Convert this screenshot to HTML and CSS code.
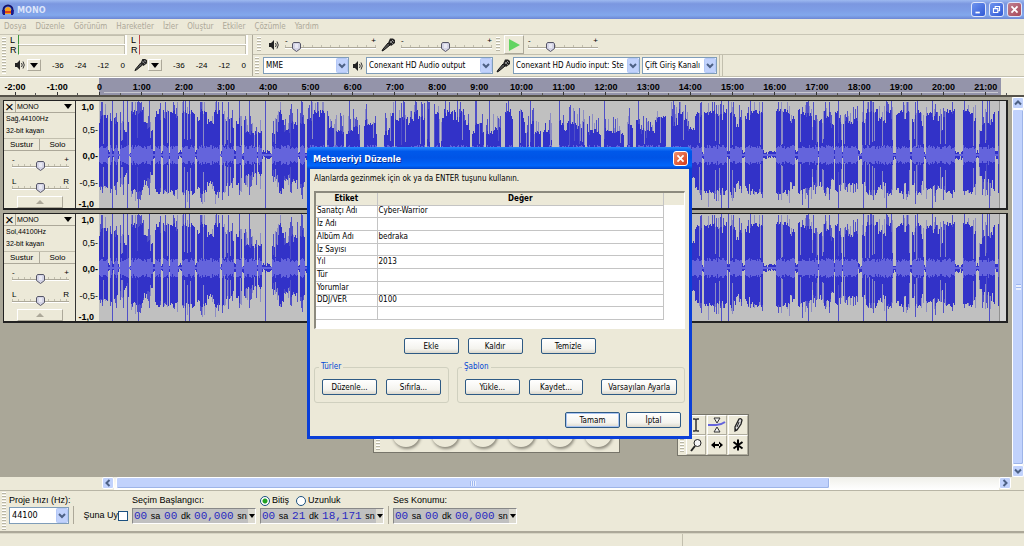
FILE: index.html
```html
<!DOCTYPE html>
<html lang="tr">
<head>
    <meta charset="UTF-8">
    <meta name="viewport" content="width=device-width, initial-scale=1.0">
    <title>MONO</title>
    <link rel="stylesheet" href="styles.css">
</head>
<body>

<svg class="symbols" aria-hidden="true">
    <symbol id="speaker" viewBox="0 0 12 12">
        <path d="M1 4h2l3-3v10L3 8H1z" fill="#222"/>
        <path d="M7.500 4q1.500 2 0 4M9 2.500q2.500 3.500 0 7" fill="none" stroke="#333"/>
    </symbol>
    <symbol id="mic" viewBox="0 0 15 14">
        <path d="M1 13l2-1 6-5-2-2-5 6z" fill="#555" stroke="#111"/>
        <path d="M7 5l3 3 4-3V2l-2-1.500H9z" fill="#222"/>
        <path d="M9 3l3 3M11 2l2 2M9 5l3-3" stroke="#aaa" stroke-width=".7"/>
    </symbol>
</svg>

<header class="titlebar">
    <svg class="app-icon" viewBox="0 0 12 12">
        <path d="M1.500 10V6a4.500 4.500 0 0 1 9 0v4" fill="none" stroke="#12126e" stroke-width="2"/>
        <path d="M3 5q3-4 6 0v5H3z" fill="#f5a21c"/>
        <path d="M3 7h6v2H3z" fill="#e0401a"/>
        <path d="M0 6h3v5H1zM9 6h3l-1 5H9z" fill="#1c1c8c"/>
    </svg>
    <h1>MONO</h1>
    <div class="window-buttons">
        <button type="button" aria-label="Simge durumuna küçült"><svg viewBox="0 0 15 15"><path d="M4 10h5v2H4z" fill="#fff"/></svg></button>
        <button type="button" aria-label="Önceki boyut"><svg viewBox="0 0 15 15"><path d="M6 6V4h5v5H9M4 6.500h5V11H4zM6 4h5" fill="none" stroke="#fff" stroke-width="1.300"/></svg></button>
        <button type="button" class="close dim" aria-label="Kapat"><svg viewBox="0 0 15 15"><path d="M4 4l7 7M11 4l-7 7" stroke="#fff" stroke-width="2"/></svg></button>
    </div>
</header>

<nav class="menu">
    <a href="#">Dosya</a>
    <a href="#">Düzenle</a>
    <a href="#">Görünüm</a>
    <a href="#">Hareketler</a>
    <a href="#">İzler</a>
    <a href="#">Oluştur</a>
    <a href="#">Etkiler</a>
    <a href="#">Çözümle</a>
    <a href="#">Yardım</a>
</nav>

<section class="toolbars">
    <div class="meter-bar">
        <div class="grip"></div>
        <div class="meter play">
            <div class="level"><span>L</span><i></i></div>
            <div class="level"><span>R</span><i></i></div>
            <div class="meter-scale">
                <svg class="icon"><use href="#speaker"/></svg>
                <button type="button" class="drop" aria-label="Çıkış ölçeri"></button>
                <span>-36</span><span>-24</span><span>-12</span><span>0</span>
            </div>
        </div>
        <div class="meter rec">
            <div class="level"><span>L</span><i></i></div>
            <div class="level"><span>R</span><i></i></div>
            <div class="meter-scale">
                <svg class="icon mic"><use href="#mic"/></svg>
                <button type="button" class="drop" aria-label="Giriş ölçeri"></button>
                <span>-36</span><span>-24</span><span>-12</span><span>0</span>
            </div>
        </div>
    </div>
    <div class="right-bars">
        <div class="bar">
            <div class="grip"></div>
            <svg class="icon"><use href="#speaker"/></svg>
            <div class="slider wide"><span>-</span><span>+</span><input type="range" aria-label="Çıkış düzeyi" value="8"></div>
            <svg class="icon mic"><use href="#mic"/></svg>
            <div class="slider wide"><span>-</span><span>+</span><input type="range" aria-label="Giriş düzeyi" value="49"></div>
            <div class="grip edge"></div>
            <button type="button" class="play-button" aria-label="Çal"><svg viewBox="0 0 12 12"><path d="M1 0l11 6-11 6z" fill="#62d462"/></svg></button>
            <div class="slider speed"><span>-</span><span>+</span><input type="range" aria-label="Çalma hızı" value="29"></div>
        </div>
        <div class="bar">
            <div class="grip"></div>
            <select class="host" aria-label="Ses sunucusu"><option>MME</option></select>
            <svg class="icon"><use href="#speaker"/></svg>
            <select class="device" aria-label="Çıkış aygıtı"><option>Conexant HD Audio output</option></select>
            <svg class="icon mic"><use href="#mic"/></svg>
            <select class="device" aria-label="Giriş aygıtı"><option>Conexant HD Audio input: Ste</option></select>
            <select class="channels" aria-label="Giriş kanalları"><option>Çift Giriş Kanalı</option></select>
            <div class="bar-end"></div>
        </div>
    </div>
</section>

<div class="ruler" id="ruler"></div>

<main class="workspace">
    <div class="tracks">
        <section class="track">
            <div class="track-panel">
                <div class="track-title"><button type="button" aria-label="İzi kapat">×</button><button type="button" class="name">MONO<i></i></button></div>
                <p>Sağ,44100Hz<br>32-bit kayan</p>
                <div class="mute-solo"><button type="button">Sustur</button><button type="button">Solo</button></div>
                <div class="slider small"><span>-</span><span>+</span><input type="range" aria-label="Kazanç" value="50"></div>
                <div class="slider small"><span>L</span><span>R</span><input type="range" aria-label="Denge" value="50"></div>
                <button type="button" class="collapse" aria-label="Daralt"></button>
            </div>
            <div class="amp"><b>1,0</b><span>0,5-</span><b>0,0-</b><span>-0,5-</span><b>-1,0</b></div>
            <svg class="wave" viewBox="0 0 907 107" preserveAspectRatio="none"></svg>
        </section>
        <section class="track">
            <div class="track-panel">
                <div class="track-title"><button type="button" aria-label="İzi kapat">×</button><button type="button" class="name">MONO<i></i></button></div>
                <p>Sol,44100Hz<br>32-bit kayan</p>
                <div class="mute-solo"><button type="button">Sustur</button><button type="button">Solo</button></div>
                <div class="slider small"><span>-</span><span>+</span><input type="range" aria-label="Kazanç" value="50"></div>
                <div class="slider small"><span>L</span><span>R</span><input type="range" aria-label="Denge" value="50"></div>
                <button type="button" class="collapse" aria-label="Daralt"></button>
            </div>
            <div class="amp"><b>1,0</b><span>0,5-</span><b>0,0-</b><span>-0,5-</span><b>-1,0</b></div>
            <svg class="wave" viewBox="0 0 907 107" preserveAspectRatio="none"></svg>
        </section>
    </div>
    <div class="vscroll">
        <button type="button" aria-label="Yukarı"><svg viewBox="0 0 10 10"><path d="M2 6.500l3-3 3 3"/></svg></button>
        <div class="thumb"></div>
        <button type="button" aria-label="Aşağı"><svg viewBox="0 0 10 10"><path d="M2 3.500l3 3 3-3"/></svg></button>
    </div>
</main>

<div class="hscroll">
    <button type="button" aria-label="Sola"><svg viewBox="0 0 10 10"><path d="M6.500 2l-3 3 3 3"/></svg></button>
    <div class="rail"><div class="thumb"></div></div>
    <button type="button" aria-label="Sağa"><svg viewBox="0 0 10 10"><path d="M3.500 2l3 3-3 3"/></svg></button>
</div>

<section class="selection-bar">
    <div class="grip"></div>
    <div class="field rate">
        <label for="rate">Proje Hızı (Hz):</label>
        <select id="rate"><option>44100</option></select>
    </div>
    <div class="divider"></div>
    <div class="snap"><label for="snap">Şuna Uy</label><input type="checkbox" id="snap"></div>
    <div class="field">
        <span>Seçim Başlangıcı:</span>
        <div class="time"><b>00</b> sa <b>00</b> dk <b>00,000</b> sn<button type="button" aria-label="Biçim"></button></div>
    </div>
    <div class="field end">
        <div class="radios">
            <input type="radio" name="range" id="end" checked><label for="end">Bitiş</label>
            <input type="radio" name="range" id="length"><label for="length">Uzunluk</label>
        </div>
        <div class="time"><b>00</b> sa <b>21</b> dk <b>18,171</b> sn<button type="button" aria-label="Biçim"></button></div>
    </div>
    <div class="divider"></div>
    <div class="field">
        <span>Ses Konumu:</span>
        <div class="time"><b>00</b> sa <b>00</b> dk <b>00,000</b> sn<button type="button" aria-label="Biçim"></button></div>
    </div>
</section>

<footer class="status"><span></span><span></span></footer>

<!-- floating toolbars -->
<div class="palette transport">
    <div class="grip"></div>
    <i></i><i></i><i></i><i></i><i></i><i></i>
</div>
<div class="palette tools">
    <div class="grip"></div>
    <div class="tool-grid">
        <button type="button" class="active" aria-label="Seçim"><svg viewBox="0 0 20 20"><path d="M7 4h2l1 1 1-1h2M7 16h2l1-1 1 1h2M10 5v10" fill="none" stroke="#333" stroke-width="1.500"/></svg></button>
        <button type="button" aria-label="Zarf"><svg viewBox="0 0 20 20"><path d="M1 10h8q5 0 9-3" fill="none" stroke="#6464dc" stroke-width="2"/><path d="M7 3h6l-3 5zM7 17h6l-3-5z" fill="#eee" stroke="#333"/></svg></button>
        <button type="button" aria-label="Çizim"><svg viewBox="0 0 20 20"><path d="M7 16V12l4-8q2-1 3 1l-1 4-4 6z" fill="#ddd" stroke="#222" stroke-width="1.300"/><path d="M7 16l2-1-2-2z" fill="#222"/><path d="M11 7l-2 5" stroke="#222"/></svg></button>
        <button type="button" aria-label="Yakınlaştır"><svg viewBox="0 0 20 20"><circle cx="11.500" cy="8" r="3.500" fill="#f6f6f6" stroke="#222"/><path d="M9 11l-4 5" stroke="#222" stroke-width="2"/></svg></button>
        <button type="button" aria-label="Zaman kaydırma"><svg viewBox="0 0 20 20"><path d="M4 10l4-3.500v7zM16 10l-4-3.500v7zM7 9h6v2H7z"/></svg></button>
        <button type="button" aria-label="Çoklu araç"><svg viewBox="0 0 20 20"><path d="M10 4.500v11M5.500 7l9 6.500M14.500 7l-9 6.500" stroke="#000" stroke-width="2"/></svg></button>
    </div>
</div>

<div class="dialog" role="dialog" aria-labelledby="dialogTitle">
    <div class="dialog-title">
        <h2 id="dialogTitle">Metaveriyi Düzenle</h2>
        <button type="button" class="close" aria-label="Kapat"><svg viewBox="0 0 15 15"><path d="M4 4l7 7M11 4l-7 7" stroke="#fff" stroke-width="2"/></svg></button>
    </div>
    <form class="dialog-body">
        <p>Alanlarda gezinmek için ok ya da ENTER tuşunu kullanın.</p>
        <div class="tag-grid">
            <table>
                <thead>
                    <tr><th>Etiket</th><th>Değer</th></tr>
                </thead>
                <tbody>
                    <tr><td>Sanatçı Adı</td><td>Cyber-Warrior</td></tr>
                    <tr><td>İz Adı</td><td></td></tr>
                    <tr><td>Albüm Adı</td><td>bedraka</td></tr>
                    <tr><td>İz Sayısı</td><td></td></tr>
                    <tr><td>Yıl</td><td>2013</td></tr>
                    <tr><td>Tür</td><td></td></tr>
                    <tr><td>Yorumlar</td><td></td></tr>
                    <tr><td>DDJ/VER</td><td>0100</td></tr>
                    <tr><td></td><td></td></tr>
                </tbody>
            </table>
        </div>
        <div class="row-buttons">
            <button type="button">Ekle</button>
            <button type="button">Kaldır</button>
            <button type="button" class="apart">Temizle</button>
        </div>
        <div class="groups">
            <fieldset>
                <legend>Türler</legend>
                <button type="button">Düzenle...</button>
                <button type="button">Sıfırla...</button>
            </fieldset>
            <fieldset class="template">
                <legend>Şablon</legend>
                <button type="button">Yükle...</button>
                <button type="button">Kaydet...</button>
                <button type="button" class="long apart">Varsayılan Ayarla</button>
            </fieldset>
        </div>
        <div class="dialog-actions">
            <button type="button" class="default">Tamam</button>
            <button type="button">İptal</button>
        </div>
    </form>
</div>

<script>
    const ruler = document.getElementById('ruler');
    for (let m = -2; m <= 21; m++) {
        const mark = document.createElement('span');
        mark.textContent = m === 0 ? '0' : m + ':00';
        ruler.appendChild(mark);
    }

    // pauses between phrases: [start, end] in wave columns
    const pauses = [[9, 10], [13, 14], [19, 20], [30, 31], [54, 55], [62, 63], [70, 70], [79, 82],
        [96, 97], [121, 122], [135, 136], [143, 144], [158, 158], [163, 172], [199, 200], [206, 207],
        [226, 227], [245, 246], [261, 264], [278, 284], [295, 295], [326, 327], [331, 334], [341, 341],
        [371, 372], [385, 386], [402, 405], [414, 419], [430, 430], [442, 443], [453, 459], [486, 487],
        [502, 504], [525, 527], [534, 536], [567, 571], [603, 604], [628, 630], [643, 645], [664, 676],
        [696, 698], [719, 719], [735, 735], [743, 743], [759, 762], [794, 796], [811, 812], [825, 826],
        [856, 863], [877, 879], [896, 898]];
    // columns where the signal reaches full scale
    const clips = [13, 24, 28, 39, 50, 84, 86, 90, 117, 140, 150, 166, 202, 212, 250, 296, 304, 316, 328,
        346, 358, 376, 377, 390, 409, 431, 460, 505, 539, 574, 622, 629, 651, 709, 739, 764, 771, 772,
        787, 792, 818, 833, 865, 883, 888, 890];

    let seed = 7;
    function rand() {
        seed = (seed * 16807) % 2147483647;
        return seed / 2147483647;
    }

    function column(x, up, down) {
        return `M${x + 0.5} ${Math.round(54 - up)}V${Math.round(54 + down)}`;
    }

    let haze = '', spikes = '', body = '', rms = '';
    let drift = 32;
    for (let x = 0; x < 900; x++) {
        const quiet = pauses.some(p => x >= p[0] && x <= p[1]);
        const up = quiet ? 1 + rand() * 4 : drift + rand() * 5;
        const down = quiet ? 1 + rand() * 4 : drift * 0.85 + rand() * 5;
        const soft = quiet ? 1 : 6 + rand() * 4;
        if (rand() > 0.6) {
            drift = Math.max(20, Math.min(41, drift + (rand() - 0.48) * 24));
        }

        if (clips.includes(x)) {
            spikes += column(x, 54, rand() > 0.5 ? 54 : 40);
        } else if (!quiet && rand() > 0.8) {
            spikes += column(x, Math.min(53, up + 5 + rand() * 14), down + rand() * 12);
        } else if (!quiet && rand() > 0.75) {
            haze += column(x, Math.min(53, up + 5 + rand() * 12), down + rand() * 14);
        }

        // some columns stay half covered above the loud part
        if (!quiet && rand() > 0.87) {
            haze += column(x, up, down);
            body += column(x, soft + rand() * 8, soft + rand() * 8);
        } else {
            body += column(x, up, down);
        }
        rms += column(x, soft, soft);
    }

    document.querySelectorAll('.wave').forEach(wave => {
        wave.innerHTML = `
            <path class="haze" d="${haze}"/>
            <path class="spikes" d="${spikes}"/>
            <path class="body" d="${body}"/>
            <path class="rms" d="${rms}"/>
            <path class="tail" d="M901 0h8v108h-8z"/>
            <path class="limit" d="M900.5 0v108"/>
        `;
    });
</script>

</body>
</html>
```

FILE: styles.css
```css
* {
    box-sizing: border-box;
}

body, h1, h2, p, button, input, select, fieldset {
    margin: 0;
    padding: 0;
    font-family: "DejaVu Sans Condensed", "DejaVu Sans", sans-serif;
    font-size: 8px;
}

body {
    position: relative;
    display: flex;
    flex-direction: column;
    min-height: 100vh;
    background-color: #ece9d8;
    color: #000;
    overflow: hidden;
}

button {
    display: flex;
    align-items: center;
    justify-content: center;
    border: none;
    background: none;
    color: #000;
}

svg {
    display: block;
    flex: none;
}

.symbols {
    position: absolute;
    width: 0;
    height: 0;
}

/* title bar */
.titlebar {
    display: flex;
    align-items: center;
    height: 19px;
    padding: 0 2px;
    gap: 3px;
    background: linear-gradient(#9db9f0, #7b97e0 20%, #7e9ee6 55%, #82a8ec 80%, #6d87d4);
}

.app-icon {
    width: 12px;
    height: 12px;
}

.titlebar h1 {
    flex: 1;
    color: #dbe4fa;
    font-size: 9px;
    font-weight: bold;
}

.window-buttons {
    display: flex;
    gap: 3px;
}

.window-buttons button, .close {
    width: 15px;
    height: 15px;
    border: 1px solid #dfe6fa;
    border-radius: 3px;
    background: linear-gradient(135deg, #6f94ee, #3059d6);
}

.window-buttons svg, .close svg {
    width: 13px;
    height: 13px;
}

button.close {
    background: linear-gradient(135deg, #f0906c, #d83a18);
}

.window-buttons button.dim {
    background: linear-gradient(135deg, #c08090, #a84858);
}

/* menu */
.menu {
    display: flex;
    align-items: center;
    gap: 9px;
    height: 16px;
    padding: 0 4px;
    border-bottom: 1px solid #c9c6b6;
}

.menu a {
    color: #aca899;
    text-decoration: none;
}

/* toolbars */
.toolbars {
    display: flex;
    height: 42px;
    border-bottom: 1px solid #c2bfae;
}

.grip {
    flex: none;
    align-self: stretch;
    width: 4px;
    margin: 2px;
    background: repeating-linear-gradient(#fff 0 1px, #b8b5a5 1px 2px, #ece9d8 2px 3px);
}

.grip.edge {
    margin: 2px 0;
}

.icon {
    width: 12px;
    height: 12px;
}

.icon.mic {
    width: 15px;
    height: 14px;
}

.meter-bar {
    display: flex;
    width: 253px;
    border-right: 1px solid #aca899;
}

.meter {
    width: 121px;
}

.level {
    display: flex;
    align-items: center;
    gap: 2px;
    height: 10px;
    padding: 0 2px;
    font-family: "Liberation Sans", sans-serif;
    font-size: 9px;
}

.level span {
    width: 6px;
}

.level i {
    flex: 1;
    height: 10px;
    border-left: 1px solid #3c963c;
    border-right: 2px solid #fff;
    border-bottom: 1px solid #fff;
    box-shadow: inset 0 1px #c2bfae, inset -1px 0 #c2bfae;
}

.rec .level i {
    border-left-color: #b44;
}

.meter-scale {
    display: flex;
    align-items: center;
    height: 20px;
    padding: 0 4px 0 5px;
    font-family: "Liberation Sans", sans-serif;
    font-size: 8px;
}

.meter-scale .icon {
    width: 14px;
}

.meter-scale span {
    flex: 1;
    text-align: right;
}

.meter-scale span:last-child {
    flex: none;
    width: 16px;
}

.drop {
    width: 14px;
    height: 12px;
    border: 1px solid #fff;
    border-right-color: #aca899;
    border-bottom-color: #aca899;
}

.drop::before, .name i {
    content: "";
    border: 4px solid transparent;
    border-top: 5px solid #000;
    border-bottom: 0;
}

.right-bars {
    flex: 1;
}

.bar {
    display: flex;
    align-items: center;
    gap: 4px;
    height: 20px;
    padding-left: 2px;
    border-bottom: 1px solid #c2bfae;
}

.bar:last-child {
    height: 21px;
    gap: 2px;
    padding-left: 0;
    border-bottom: none;
}

.bar > .icon {
    margin: 0 0 0 1px;
}

.bar .wide {
    width: 91px;
    margin-left: 1px;
}

.bar .speed {
    width: 70px;
}

.bar-end {
    align-self: stretch;
    width: 4px;
    border-left: 1px solid #c2bfae;
    border-right: 1px solid #c2bfae;
}

.play-button {
    width: 20px;
    height: 19px;
    border: 1px solid #fff;
    border-right-color: #aca899;
    border-bottom-color: #aca899;
}

.play-button svg {
    width: 12px;
    height: 12px;
}

select {
    height: 17px;
    padding: 0 13px 0 2px;
    border: 1px solid #7f9db9;
    border-radius: 0;
    appearance: none;
    color: #000;
    background: #fff url("data:image/svg+xml,%3Csvg xmlns='http://www.w3.org/2000/svg' viewBox='0 0 12 15'%3E%3Crect x='.5' y='.5' width='11' height='14' rx='1' fill='%23c1d2fc' stroke='%23b4c8f6'/%3E%3Cpath d='M3 6l3 3 3-3' fill='none' stroke='%234d6185' stroke-width='2'/%3E%3C/svg%3E") no-repeat right center / 12px 15px;
}

.host {
    width: 86px;
}

.device {
    width: 127px;
}

.channels {
    width: 75px;
}

/* sliders */
.slider {
    display: flex;
    flex-wrap: wrap;
    justify-content: space-between;
    font-family: "Liberation Sans", sans-serif;
    font-size: 8px;
    line-height: 6px;
}

input[type="range"] {
    width: 100%;
    height: 10px;
    margin-top: -2px;
    appearance: none;
    background: linear-gradient(#aca899, #aca899) 0 5px / 100% 1px no-repeat,
        linear-gradient(#fff, #fff) 0 6px / 100% 1px no-repeat,
        repeating-linear-gradient(to right, #c2bfae 0 1px, transparent 1px 9px) 0 3px / 100% 3px no-repeat;
}

.small input[type="range"] {
    background: linear-gradient(#aca899, #aca899) 0 5px / 100% 1px no-repeat,
        linear-gradient(#fff, #fff) 0 6px / 100% 1px no-repeat,
        repeating-linear-gradient(to right, #c2bfae 0 1px, transparent 1px 6px) 0 3px / 100% 3px no-repeat;
}

input[type="range"]::-webkit-slider-thumb {
    width: 9px;
    height: 10px;
    appearance: none;
    background: url("data:image/svg+xml,%3Csvg xmlns='http://www.w3.org/2000/svg' viewBox='0 0 9 10'%3E%3Cpath d='M1.500.5h6L8.500 2v4.500l-4 3-4-3V2z' fill='%23d4d4e6' stroke='%23555566'/%3E%3Cpath d='M3 3h3M3 5h3' stroke='%23fff'/%3E%3C/svg%3E");
}

/* timeline */
.ruler {
    display: flex;
    height: 20px;
    padding-right: 17px;
    border-top: 1px solid #fff;
    border-bottom: 2px solid #555249;
    background: linear-gradient(#c8c8d0, #c8c8d0) 104px 14px / calc(100% - 130px) 1px no-repeat,
        linear-gradient(#9494aa, #9494aa) 99px 0 / calc(100% - 122px) 100% no-repeat;
}

.ruler span {
    flex: 1 1 0;
    padding-top: 4px;
    text-align: center;
    font-family: "Liberation Sans", sans-serif;
    font-size: 9px;
    font-weight: bold;
    line-height: 10px;
    background: linear-gradient(#333, #333) center bottom / 1px 3px no-repeat,
        linear-gradient(#555, #555) right bottom / 1px 2px no-repeat;
}

.ruler span:first-child {
    margin-left: -6px;
}

/* tracks */
.workspace {
    display: flex;
    flex: 1;
    background-color: #aaa798;
}

.tracks {
    flex: 1;
    padding: 3px 4px 0 3px;
}

.track {
    display: flex;
    height: 110px;
    margin-bottom: 3px;
    border: 1px solid #222;
    border-right-width: 2px;
    border-bottom-width: 2px;
    background-color: #ece9d8;
}

.track-panel {
    width: 72px;
    border-right: 1px solid #333;
}

.track-panel button {
    font-family: "Liberation Sans", sans-serif;
}

.track-title {
    display: flex;
    height: 12px;
    border-bottom: 1px solid #aca899;
}

.track-title button:first-child {
    width: 12px;
    border-right: 1px solid #aca899;
    font-size: 15px;
    line-height: 10px;
}

.track-title .name {
    flex: 1;
    justify-content: space-between;
    padding: 0 3px 0 1px;
    font-size: 7px;
}

.track-panel p {
    padding: 0 2px 1px;
    border-bottom: 1px solid #c2bfae;
    font-family: "Liberation Sans", sans-serif;
    font-size: 7px;
    line-height: 12px;
}

.mute-solo {
    display: flex;
    height: 12px;
    border-bottom: 1px solid #aca899;
}

.mute-solo button {
    flex: 1;
}

.mute-solo button:first-child {
    border-right: 1px solid #aca899;
}

.slider.small {
    margin: 6px 6px 8px 8px;
}

.small + .small {
    margin-bottom: 3px;
}

.collapse {
    width: 46px;
    height: 12px;
    margin: 0 auto;
    border: 1px solid #fff;
    border-right-color: #aca899;
    border-bottom-color: #aca899;
}

.collapse::before {
    content: "";
    border: 4px solid transparent;
    border-bottom: 4px solid #aca899;
    border-top: 0;
}

.amp {
    display: grid;
    grid-template-rows: 12px 33px 20px 34px 8px;
    align-items: center;
    justify-items: end;
    width: 23px;
    padding-right: 1px;
    font-family: "Liberation Sans", sans-serif;
    font-size: 9px;
    line-height: 10px;
}

.amp b:first-child, .amp b:last-child {
    padding-right: 4px;
}

.wave {
    flex: 1;
    min-width: 0;
    height: 107px;
    background-color: #c0c0c0;
}

.wave path {
    fill: none;
    stroke-width: 1;
    shape-rendering: crispEdges;
}

.wave .haze {
    stroke: #8c8cc4;
}

.wave .spikes {
    stroke: #5050c8;
}

.wave .body {
    stroke: #3232c8;
}

.wave .rms {
    stroke: #6464dc;
}

.wave .limit {
    stroke: #909090;
}

.wave .tail {
    fill: #d6d6d6;
}

/* scrollbars */
.vscroll {
    display: flex;
    flex-direction: column;
    width: 12px;
    background-color: #f4f3ee;
}

.vscroll button, .hscroll button {
    width: 12px;
    height: 12px;
    border: 1px solid #fff;
    border-radius: 2px;
    background-color: #c1d2fc;
}

.vscroll svg, .hscroll svg {
    width: 10px;
    height: 10px;
    fill: none;
    stroke: #4d6185;
    stroke-width: 2;
}

.thumb {
    border: 1px solid #fff;
    border-radius: 2px;
    box-shadow: inset -1px -1px #9db4e8;
}

.vscroll .thumb {
    flex: 1;
    background: repeating-linear-gradient(#9fb8f0 0 1px, #eaf0fe 1px 3px) center / 5px 6px no-repeat, #c1d2fc;
}

.hscroll {
    display: flex;
    height: 13px;
    padding: 0 13px 0 102px;
}

.rail {
    flex: 1;
    padding: 0 1px 0 2px;
    background: linear-gradient(#f0f0ea, #fff);
}

.rail .thumb {
    width: 81%;
    height: 12px;
    background: repeating-linear-gradient(to right, #9fb8f0 0 1px, #eaf0fe 1px 2px) center / 6px 5px no-repeat, #c1d2fc;
}

/* selection toolbar */
.selection-bar {
    display: flex;
    align-items: flex-end;
    height: 43px;
    padding-bottom: 7px;
    border-top: 1px solid #b8b5a5;
    border-bottom: 2px solid #aca899;
    font-family: "Liberation Sans", sans-serif;
}

.selection-bar .grip {
    height: 38px;
    margin: 1px 3px 0 2px;
}

.selection-bar span, .selection-bar label, .selection-bar select {
    font-size: 9px;
    line-height: 11px;
}

.field {
    display: flex;
    flex-direction: column;
    gap: 2px;
    width: 124px;
}

.field.rate {
    gap: 1px;
    width: 60px;
    white-space: nowrap;
}

.field.end {
    margin-left: 4px;
}

.divider {
    width: 1px;
    height: 18px;
    margin: 0 4px;
    background-color: #aca899;
}

.snap {
    display: flex;
    align-items: center;
    justify-content: flex-end;
    width: 50px;
    height: 17px;
    margin-right: 4px;
}

input[type="checkbox"], input[type="radio"] {
    width: 10px;
    height: 10px;
    appearance: none;
    border: 1px solid #1c5180;
    background-color: #fff;
}

input[type="radio"] {
    border-radius: 50%;
}

input[type="radio"]:checked {
    background: radial-gradient(#21a121 0 2px, #fff 3px);
}

.radios {
    display: flex;
    align-items: center;
    gap: 2px;
    height: 11px;
}

.radios label {
    margin-right: 5px;
}

.time {
    display: flex;
    align-items: center;
    justify-content: space-between;
    height: 16px;
    padding-left: 1px;
    border: 1px solid #888;
    border-right-color: #fff;
    border-bottom-color: #fff;
    background-color: #c0c0c0;
    font-size: 9px;
    white-space: pre;
}

.time b {
    color: #2828c0;
    font-family: "Liberation Mono", monospace;
    font-size: 11px;
    font-weight: normal;
}

.time button {
    width: 7px;
    height: 14px;
    background-color: #dcdad0;
}

.time button::before {
    content: "";
    border: 3px solid transparent;
    border-top: 4px solid #000;
    border-bottom: 0;
}

.status {
    display: flex;
    height: 13px;
    border-top: 1px solid #d8d5c4;
}

.status span {
    flex: 1;
}

.status span:first-child {
    flex: 2;
    border-right: 1px solid #c2bfae;
}

/* floating toolbars */
.palette {
    position: absolute;
    display: flex;
    border: 1px solid #77756a;
    background-color: #ece9d8;
}

.transport {
    left: 373px;
    top: 415px;
    width: 247px;
    height: 38px;
    align-items: flex-end;
    justify-content: space-between;
    padding-right: 7px;
}

.transport i {
    width: 28px;
    height: 28px;
    margin-bottom: 5px;
    border-radius: 50%;
    box-shadow: 1px 2px 3px #8c897c;
    background-color: #ece9d8;
}

.tools {
    left: 677px;
    top: 414px;
}

.tool-grid {
    display: grid;
    grid-template-columns: repeat(3, 20px);
    gap: 0 1px;
}

.tool-grid button {
    height: 20px;
    border: 1px solid #fff;
    border-right-color: #b0ad9e;
    border-bottom-color: #b0ad9e;
}

.tool-grid svg {
    width: 20px;
    height: 20px;
}

/* metadata dialog */
.dialog {
    position: absolute;
    left: 307px;
    top: 147px;
    width: 385px;
    border: 3px solid #0a3fd8;
    border-top: 0;
    border-radius: 6px 6px 0 0;
    background-color: #ece9d8;
}

.dialog-title {
    display: flex;
    align-items: center;
    justify-content: space-between;
    height: 22px;
    margin: 0 -3px;
    padding: 1px 4px 0 6px;
    border-radius: 5px 5px 0 0;
    background: linear-gradient(#2a8cff, #0058ea 20%, #0054e6 50%, #0066fc 85%, #0044c8);
}

.dialog-title h2 {
    color: #fff;
    font-size: 9px;
    font-weight: bold;
    text-shadow: 1px 1px #0a2c90;
}

.dialog-title .close {
    border-color: #fff;
}

.dialog-body {
    padding: 4px 4px 8px;
}

.dialog-body p {
    padding-bottom: 6px;
    line-height: 12px;
}

.tag-grid {
    height: 138px;
    border: 1px solid #fff;
    border-top: 2px solid #8c8a7e;
    border-left: 2px solid #8c8a7e;
    background: linear-gradient(#ece9d8 12px, #fff 12px);
}

table {
    width: 348px;
    height: 127px;
    border-collapse: collapse;
    table-layout: fixed;
}

th, td {
    height: 12px;
    padding: 0 1px;
    border-right: 1px solid #c4c4c4;
    border-bottom: 1px solid #c4c4c4;
    text-align: left;
    line-height: 10px;
}

th {
    background-color: #ece9d8;
    text-align: center;
}

th:first-child {
    width: 61px;
}

.row-buttons, .dialog-actions {
    display: flex;
    gap: 9px;
}

.row-buttons {
    justify-content: center;
    padding: 9px 0 7px;
}

.dialog-body button {
    width: 55px;
    height: 16px;
    border: 1px solid #2e5a84;
    border-radius: 2px;
    background: linear-gradient(#fff, #f4f3ee 70%, #dcd8cc);
}

.dialog-body .apart {
    margin-left: 9px;
}

.dialog-body .long {
    width: 76px;
}

.dialog-body .default {
    box-shadow: inset 0 0 0 1px #a9c4f2;
}

.groups {
    display: flex;
    gap: 8px;
}

fieldset {
    display: flex;
    gap: 9px;
    width: 135px;
    min-width: 0;
    padding: 6px 7px 7px;
    border: 1px solid #d0d0bf;
    border-radius: 3px;
}

.template {
    flex: 1;
}

legend {
    padding: 0 2px;
    margin-left: -3px;
    color: #0046d5;
    line-height: 12px;
}

.dialog-actions {
    justify-content: flex-end;
    gap: 6px;
    padding: 9px 4px 0;
}
```
